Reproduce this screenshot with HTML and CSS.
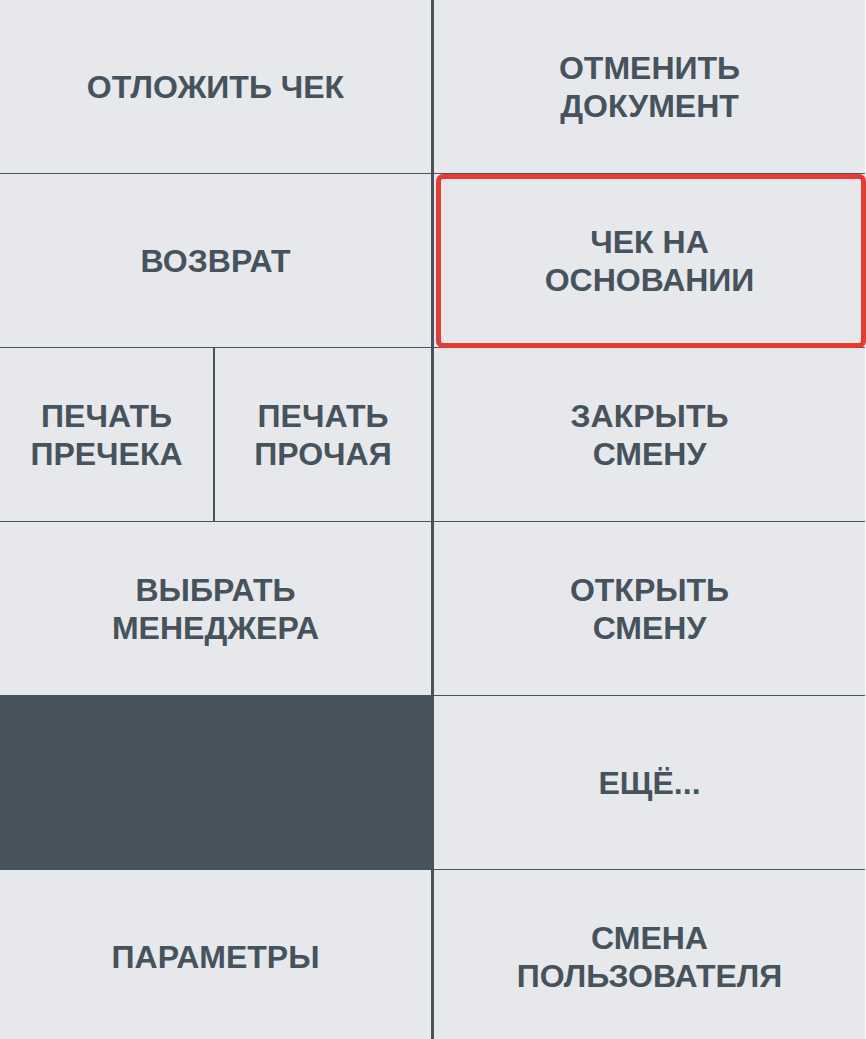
FILE: index.html
```html
<!DOCTYPE html>
<html lang="ru">
<head>
<meta charset="utf-8">
<meta name="viewport" content="width=device-width, initial-scale=1">
<title>Меню кассы</title>
<link rel="stylesheet" href="styles.css">
</head>
<body>
<main class="menu">
  <button class="key" type="button">ОТЛОЖИТЬ ЧЕК</button>
  <button class="key" type="button">ОТМЕНИТЬ<br>ДОКУМЕНТ</button>
  <button class="key" type="button">ВОЗВРАТ</button>
  <button class="key key-selected" type="button">ЧЕК НА<br>ОСНОВАНИИ</button>
  <div class="split">
    <button class="key" type="button">ПЕЧАТЬ<br>ПРЕЧЕКА</button>
    <button class="key" type="button">ПЕЧАТЬ<br>ПРОЧАЯ</button>
  </div>
  <button class="key" type="button">ЗАКРЫТЬ<br>СМЕНУ</button>
  <button class="key" type="button">ВЫБРАТЬ<br>МЕНЕДЖЕРА</button>
  <button class="key" type="button">ОТКРЫТЬ<br>СМЕНУ</button>
  <div class="empty"></div>
  <button class="key" type="button">ЕЩЁ...</button>
  <button class="key" type="button">ПАРАМЕТРЫ</button>
  <button class="key" type="button">СМЕНА<br>ПОЛЬЗОВАТЕЛЯ</button>
</main>
</body>
</html>
```
FILE: styles.css
```css
* {
  box-sizing: border-box;
}

html {
  scrollbar-width: none;
}

body {
  margin: 0;
  background: #ffffff;
}

.menu {
  display: grid;
  grid-template-columns: 1fr 1fr;
  grid-auto-rows: 173px;
  gap: 1px 3px;
  margin-right: 1px;
  background: #46535c;
}

.split {
  display: grid;
  grid-template-columns: 213fr 216fr;
  gap: 2px;
}

.key {
  position: relative;
  margin: 0;
  padding: 0;
  border: 0;
  background: #e6e8eb;
  color: #46535c;
  font: bold 32px/38px "Liberation Sans", Arial, sans-serif;
  text-align: center;
}

.key-selected::after {
  content: "";
  position: absolute;
  inset: 0 -1px -1px 2px;
  border: 5px solid #e53b30;
  border-radius: 7px;
}
```
